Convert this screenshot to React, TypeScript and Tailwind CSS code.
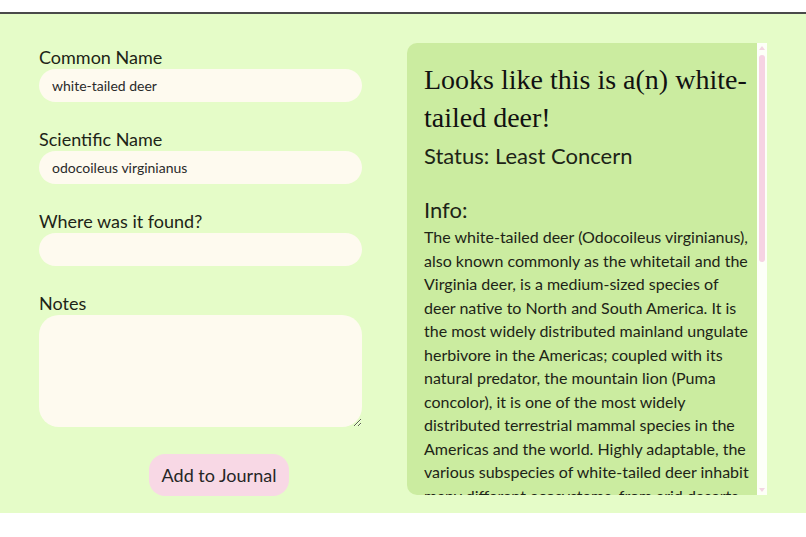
import React from "react";

const info =
  "The white-tailed deer (Odocoileus virginianus), also known commonly as the whitetail and the Virginia deer, is a medium-sized species of deer native to North and South America. It is the most widely distributed mainland ungulate herbivore in the Americas; coupled with its natural predator, the mountain lion (Puma concolor), it is one of the most widely distributed terrestrial mammal species in the Americas and the world. Highly adaptable, the various subspecies of white-tailed deer inhabit many different ecosystems, from arid deserts to tropical rainforests, subarctic forests, and temperate grasslands. The species has been introduced to New Zealand, the Greater Antilles, and several countries in Europe, such as Finland, the Czech Republic, and Serbia. Male white-tailed deer, known as bucks, grow antlers each year and shed them in late winter, while females, known as does, typically give birth to one to three spotted fawns in late spring or early summer.";

function Field({ label, value }: { label: string; value: string }) {
  return (
    <div className="flex flex-col">
      <label className="text-[18px] leading-[24px] text-[#1d2417]">{label}</label>
      <input
        readOnly
        value={value}
        className="w-[323px] h-[33px] rounded-full bg-[#fefaef] pl-[13px] text-[14px] text-[#2a2a2a] outline-none"
      />
    </div>
  );
}

export default function App() {
  return (
    <div className="w-[806px] h-[537px] bg-white font-['Lato',sans-serif]">
      <div className="h-[12px] bg-white" />
      <main className="h-[501px] border-t-2 border-[#4a4a4a] bg-[#e5fcc8] grid grid-cols-[360px_360px] gap-[8px] px-[39px] pt-[29px] pb-[18px]">
        <div className="flex flex-col pt-[2px]">
          <div className="flex flex-col gap-[25px]">
            <Field label="Common Name" value="white-tailed deer" />
            <Field label="Scientific Name" value="odocoileus virginianus" />
            <Field label="Where was it found?" value="" />
            <div className="flex flex-col">
              <label className="text-[18px] leading-[24px] text-[#1d2417]">Notes</label>
              <textarea className="w-[323px] h-[112px] rounded-[20px] bg-[#fefaef] p-[12px] text-[14px] outline-none" />
            </div>
          </div>
          <div className="mt-[27px] flex justify-center">
            <button className="h-[42px] px-[13px] rounded-[16px] bg-[#f8d8e5] text-[18px] text-[#262626]">
              Add to Journal
            </button>
          </div>
        </div>
        <div className="h-[452px] flex">
          <div className="w-[350px] h-full overflow-hidden rounded-l-[10px] bg-[#cbeca0] pl-[17px] pr-[4px] pt-[18px]">
            <h1 className="font-['Liberation_Serif',serif] text-[28px] leading-[38px] text-[#111]">
              Looks like this is a(n) white-tailed deer!
            </h1>
            <h2 className="mt-[4px] text-[22px] leading-[30px] text-[#1d2417]">Status: Least Concern</h2>
            <h3 className="mt-[24px] text-[22px] leading-[30px] text-[#1d2417]">Info:</h3>
            <p className="text-[16px] leading-[23.5px] text-[#1d2417] pb-[16px]">{info}</p>
          </div>
          <div className="w-[10px] h-full bg-[#fdfff8] flex flex-col items-center">
            <svg width="6" height="4" viewBox="0 0 6 4" className="mt-[3px]">
              <path d="M3 0 L6 4 L0 4 Z" fill="#f3d6e2" />
            </svg>
            <div className="mt-[5px] w-[6px] h-[207px] rounded-full bg-[#f6d3e3]" />
            <div className="flex-1" />
            <svg width="6" height="4" viewBox="0 0 6 4" className="mb-[3px]">
              <path d="M0 0 L6 0 L3 4 Z" fill="#f3d6e2" />
            </svg>
          </div>
        </div>
      </main>
    </div>
  );
}
